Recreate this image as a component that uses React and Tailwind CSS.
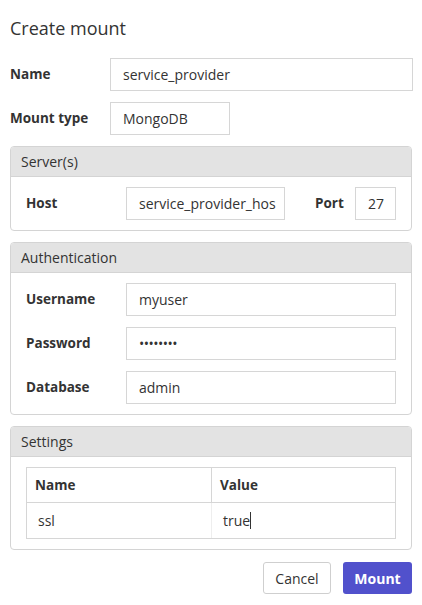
import React from "react";

const font = { fontFamily: '"Open Sans", "Noto Sans", sans-serif' };

function Input({ value, className = "" }) {
  return (
    <div
      className={`h-[33px] border border-[#d6d6d6] bg-white flex items-center pl-[12px] text-[14px] text-[#333] overflow-hidden whitespace-nowrap ${className}`}
    >
      {value}
    </div>
  );
}

function Panel({ title, children }) {
  return (
    <div className="border border-[#d4d4d4] rounded-[4px] overflow-hidden">
      <div className="h-[30px] bg-[#e3e3e3] border-b border-[#d4d4d4] flex items-center px-[10px] text-[14px] text-[#333]">
        {title}
      </div>
      <div className="px-[15px] py-[10px]">{children}</div>
    </div>
  );
}

export default function App() {
  return (
    <div className="w-[422px] h-[605px] bg-white px-[10px] pt-[15px] text-[#333]" style={font}>
      <div className="text-[18px] leading-[26px] mb-[17px]">Create mount</div>

      <div className="flex flex-col gap-[11px]">
        <div className="flex items-center">
          <div className="w-[100px] text-[13.5px] font-bold">Name</div>
          <Input value="service_provider" className="flex-1 mr-[-1px]" />
        </div>
        <div className="flex items-center">
          <div className="w-[100px] text-[13.5px] font-bold">Mount type</div>
          <Input value="MongoDB" className="w-[120px]" />
        </div>

        <Panel title="Server(s)">
          <div className="flex items-center">
            <div className="w-[100px] text-[13.5px] font-bold">Host</div>
            <Input value="service_provider_hos" className="w-[159px]" />
            <div className="ml-[30px] w-[40px] text-[13.5px] font-bold">Port</div>
            <Input value="27" className="w-[41px] pl-[10px]" />
          </div>
        </Panel>

        <Panel title="Authentication">
          <div className="flex flex-col gap-[11px]">
            <div className="flex items-center">
              <div className="w-[100px] text-[13.5px] font-bold">Username</div>
              <Input value="myuser" className="flex-1" />
            </div>
            <div className="flex items-center">
              <div className="w-[100px] text-[13.5px] font-bold">Password</div>
              <Input value="••••••••" className="flex-1 text-[11px] tracking-[-0.5px]" />
            </div>
            <div className="flex items-center">
              <div className="w-[100px] text-[13.5px] font-bold">Database</div>
              <Input value="admin" className="flex-1" />
            </div>
          </div>
        </Panel>

        <Panel title="Settings">
          <div className="border border-[#d6d6d6] text-[13.5px]">
            <div className="flex h-[35px] border-b border-[#d6d6d6] font-bold">
              <div className="w-[185px] border-r border-[#d6d6d6] flex items-center pl-[8px]">Name</div>
              <div className="flex-1 flex items-center pl-[8px]">Value</div>
            </div>
            <div className="flex h-[35px] text-[14px]">
              <div className="w-[185px] border-r border-[#eeeeee] flex items-center pl-[11px]">ssl</div>
              <div className="flex-1 flex items-center pl-[11px]">
                true<span className="inline-block w-px h-[17px] bg-[#333]"></span>
              </div>
            </div>
          </div>
        </Panel>
      </div>

      <div className="flex justify-end gap-[12px] mt-[12px]">
        <div className="w-[68px] h-[32px] border border-[#cfcfcf] rounded-[3px] flex items-center justify-center text-[14px] text-[#333] bg-white">
          Cancel
        </div>
        <div className="w-[69px] h-[32px] rounded-[3px] flex items-center justify-center text-[14px] font-bold text-white bg-[#5151cc]">
          Mount
        </div>
      </div>
    </div>
  );
}
